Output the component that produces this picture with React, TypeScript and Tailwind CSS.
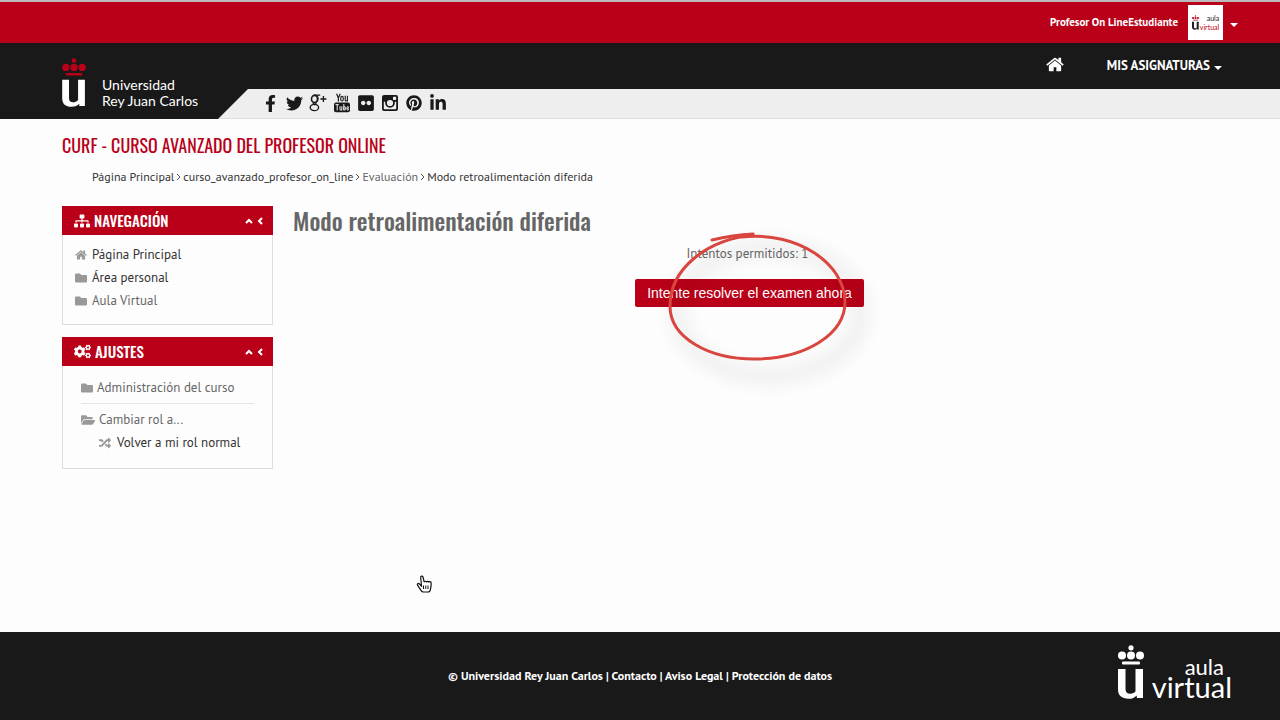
import type { ReactNode } from 'react';
import {
  FaCogs,
  FaFacebookF,
  FaFlickr,
  FaFolder,
  FaFolderOpen,
  FaLinkedinIn,
  FaPinterest,
  FaRandom,
  FaSitemap,
  FaTwitter,
} from 'react-icons/fa';

function HomeIcon({ className }: { className: string }) {
  return (
    <svg viewBox="64 192 1664 1408" className={className} fill="currentColor" aria-hidden="true">
      <path d="M1472 992v480q0 26-19 45t-45 19h-384v-384H768v384H384q-26 0-45-19t-19-45V992q0-1 .5-3t.5-3l575-474 575 474q1 2 1 6zm223-69-62 74q-8 9-21 11h-3q-13 0-21-7L896 424l-692 577q-12 8-24 7-13-2-21-11l-62-74q-8-10-7-23.500t11-21.500l719-599q32-26 76-26t76 26l244 204V288q0-14 9-23t23-9h192q14 0 23 9t9 23v408l219 182q10 8 11 21.500t-7 23.500z" />
    </svg>
  );
}

function GooglePlusIcon() {
  return (
    <svg viewBox="0 0 18 18" className="h-[18px] w-[18px]" fill="none" stroke="currentColor" aria-hidden="true">
      <ellipse cx="5.5" cy="5" rx="3" ry="3.6" strokeWidth="1.6" />
      <path d="M5 1.2h6.2M7.6 1.4c2 1.8 1.9 4.6.2 6.2-1.5 1.2-1.6 1.9 0 3" strokeWidth="1.2" />
      <ellipse cx="5.4" cy="13.5" rx="4.2" ry="3.2" strokeWidth="1.3" />
      <path d="M5 8.6c-1.2.8-1 1.6 1 2.2" strokeWidth="1.3" />
      <path d="M11.4 5h6M14.4 2v6" strokeWidth="1.3" />
    </svg>
  );
}

function YoutubeIcon() {
  return (
    <svg viewBox="0 0 16 20" className="h-5 w-4" fill="currentColor" aria-hidden="true">
      <path d="M2.6.8 4.4 5v3.4M6.2.8 4.4 5" fill="none" stroke="currentColor" strokeWidth="1.2" />
      <rect x="6.8" y="3.4" width="2.4" height="4.6" rx="1.2" fill="none" stroke="currentColor" strokeWidth="1.1" />
      <path d="M11.2 2.8v4.4c0 1.2 1.6.8 2.2-.2M13.4 2.8v5.6" fill="none" stroke="currentColor" strokeWidth="1.1" />
      <rect x="0" y="9.6" width="16" height="9.6" rx="2" />
      <g fill="none" stroke="#eee" strokeWidth="1">
        <path d="M1.6 11.6h3.2M3.2 11.6v5.8M6 13.2v3.4c0 .9 1 .7 1.6 0M7.8 13.2v4.4M9.8 11v6.4" />
        <rect x="9.8" y="13.6" width="1.6" height="3.4" rx=".7" />
        <path d="M14.6 16.2c0 1.5-1.6 1.5-1.6 0v-1.6c0-1.5 1.6-1.5 1.6 0v.6H13" />
      </g>
    </svg>
  );
}

function InstagramIcon() {
  return (
    <svg viewBox="0 0 16 16" className="h-4 w-4" aria-hidden="true">
      <path
        fill="currentColor"
        fillRule="evenodd"
        d="M2 0h12a2 2 0 0 1 2 2v12a2 2 0 0 1-2 2H2a2 2 0 0 1-2-2V2a2 2 0 0 1 2-2Zm-.2 6.8v6.7c0 .4.3.7.7.7h11c.4 0 .7-.3.7-.7V6.8h-1.4a4.9 4.9 0 1 1-9.6 0Zm9.9-5a.7.7 0 0 0-.7.7v1.8c0 .4.3.7.7.7h1.8c.4 0 .7-.3.7-.7V2.500a.7.7 0 0 0-.7-.7ZM8 4.900a3.100 3.100 0 1 0 0 6.200 3.100 3.100 0 0 0 0-6.200Z"
      />
    </svg>
  );
}

// Crown over the letter u, shared by the three university logos
function CrownLogo({ className, crown }: { className: string; crown: string }) {
  return (
    <svg viewBox="0 0 26 54" className={className} aria-hidden="true">
      <g className={crown}>
        <circle cx="13" cy="2.8" r="2.6" />
        <circle cx="4" cy="10.4" r="4" />
        <circle cx="13" cy="10.4" r="4" />
        <circle cx="22" cy="10.4" r="4" />
        <rect x="4" y="16.4" width="18" height="3" rx="1" />
      </g>
      <path
        fill="currentColor"
        d="M0 24h7.5v20c0 3.2 1.4 4.8 4.6 4.8 2.6 0 4.5-1.4 5.4-2.6V24H25v29h-6.2v-2.6c-2 2-4.6 3.4-8.4 3.4C3.7 53.8 0 50.4 0 44.6Z"
      />
    </svg>
  );
}

function Caret() {
  return <span className="mt-1 border-x-4 border-t-4 border-x-transparent border-t-white" />;
}

function Separator() {
  return (
    <svg viewBox="0 0 5 8" className="mx-0.5 h-2 w-[5px]" fill="none" stroke="#555" aria-hidden="true">
      <path d="m1 1 3 3-3 3" />
    </svg>
  );
}

const social = [
  { name: 'Facebook', icon: <FaFacebookF size={17} /> },
  { name: 'Twitter', icon: <FaTwitter size={17} /> },
  { name: 'Google+', icon: <GooglePlusIcon /> },
  { name: 'YouTube', icon: <YoutubeIcon /> },
  { name: 'Flickr', icon: <FaFlickr size={18} /> },
  { name: 'Instagram', icon: <InstagramIcon /> },
  { name: 'Pinterest', icon: <FaPinterest size={16} /> },
  { name: 'LinkedIn', icon: <FaLinkedinIn size={18} /> },
];

const navItems = [
  { label: 'Página Principal', icon: <HomeIcon className="h-2.5 w-3" />, color: 'text-[#333]' },
  { label: 'Área personal', icon: <FaFolder size={12} />, color: 'text-[#333]' },
  { label: 'Aula Virtual', icon: <FaFolder size={12} />, color: 'text-[#666]' },
];

function Block({ title, icon, children }: { title: string; icon: ReactNode; children: ReactNode }) {
  return (
    <section className="border border-[#ddd]">
      <div className="-mx-px -mt-px flex h-[29px] items-center bg-[#b90018] pr-2.5 pl-3 text-white">
        {icon}
        <h2 className="ml-1 font-['Oswald','Roboto_Condensed',sans-serif] text-[15px] font-medium">{title}</h2>
        <div className="ml-auto flex items-center gap-1">
          <button type="button" aria-label={`Contraer ${title}`}>
            <svg viewBox="0 0 8 6" className="h-1.5 w-2" fill="none" stroke="currentColor" strokeWidth="2">
              <path d="m1 5 3-3 3 3" />
            </svg>
          </button>
          <button type="button" aria-label={`Acoplar ${title}`}>
            <svg viewBox="0 0 6 8" className="h-2 w-1.5" fill="none" stroke="currentColor" strokeWidth="2">
              <path d="M5 1 2 4l3 3" />
            </svg>
          </button>
        </div>
      </div>
      {children}
    </section>
  );
}

export default function App() {
  return (
    <div className="relative flex min-h-screen flex-col bg-[#fdfdfd] font-['PT_Sans','Open_Sans',sans-serif] text-[13px] text-[#333]">
      <div className="flex h-[43px] items-center justify-end border-t-2 border-[#bbb] bg-[#b90018] pr-[42px] text-white">
        <button type="button" className="flex items-center">
          <span className="text-[11px] font-bold">Profesor On LineEstudiante</span>
          <span className="mr-[7px] ml-2.5 flex h-[35px] w-[35px] items-center justify-center gap-px bg-white text-[#222]">
            <CrownLogo className="h-[15px] w-[7px]" crown="fill-[#b90018]" />
            <span className="flex flex-col items-end font-['Lato',sans-serif] text-[7px] leading-[9px]">
              <span>aula</span>
              <span className="text-[#b90018]">virtual</span>
            </span>
          </span>
          <Caret />
        </button>
      </div>

      <header className="flex bg-[#191919] text-white">
        <a href="#" className="flex h-[76px] w-[218px] shrink-0 items-end pb-2.5 pl-[62px]">
          <CrownLogo className="mb-0.5 h-[49px] w-6" crown="fill-[#b90018]" />
          <span className="ml-4 font-['Lato',sans-serif] text-sm leading-4 whitespace-nowrap">
            Universidad
            <br />
            Rey Juan Carlos
          </span>
        </a>
        <div className="flex flex-1 flex-col">
          <nav className="flex h-[46px] items-center justify-end gap-[43px] pr-[58px]">
            <a href="#" aria-label="Inicio" className="pb-1">
              <HomeIcon className="h-[15px] w-[18px]" />
            </a>
            <button type="button" className="flex items-center gap-1 text-[13px] font-bold">
              MIS ASIGNATURAS
              <Caret />
            </button>
          </nav>
          <div className="flex h-[30px] border-b border-[#ddd] bg-[#eee] text-[#191919]">
            <svg viewBox="0 0 30 30" className="h-[30px] w-[30px] shrink-0" aria-hidden="true">
              <path d="M0 0h30L0 30Z" fill="#191919" />
            </svg>
            <ul className="ml-2.5 flex h-7 items-center">
              {social.map((item) => (
                <li key={item.name} className="flex w-6 justify-center">
                  <a href="#" aria-label={item.name}>
                    {item.icon}
                  </a>
                </li>
              ))}
            </ul>
          </div>
        </div>
      </header>

      <div className="px-[62px] pt-3 pb-10">
        <h1 className="font-['Oswald','Roboto_Condensed',sans-serif] text-lg leading-7 font-normal text-[#b90018]">
          CURF - CURSO AVANZADO DEL PROFESOR ONLINE
        </h1>
        <nav aria-label="Ruta" className="mt-2 ml-[30px] flex h-5 items-center text-xs whitespace-nowrap">
          <a href="#">Página Principal</a>
          <Separator />
          <a href="#">curso_avanzado_profesor_on_line</a>
          <Separator />
          <span className="text-[#666]">Evaluación</span>
          <Separator />
          <a href="#">Modo retroalimentación diferida</a>
        </nav>

        <div className="mt-[19px] flex gap-5">
          <aside className="flex w-[211px] shrink-0 flex-col gap-3">
            <Block title="NAVEGACIÓN" icon={<FaSitemap size={16} />}>
              <ul className="px-3 pt-2 pb-3">
                {navItems.map((item) => (
                  <li key={item.label} className="flex h-[23px] items-center gap-[5px]">
                    <span className="text-[#999]">{item.icon}</span>
                    <a href="#" className={item.color}>
                      {item.label}
                    </a>
                  </li>
                ))}
              </ul>
            </Block>
            <Block title="AJUSTES" icon={<FaCogs size={17} />}>
              <div className="px-[18px] pt-2.5 pb-3.5">
                <div className="flex h-7 items-start gap-1 border-b border-[#e5e5e5] pt-1 leading-4 text-[#666]">
                  <FaFolder size={12} className="mt-0.5 text-[#999]" />
                  Administración del curso
                </div>
                <div className="mt-1 flex h-[23px] items-center gap-1 text-[#666]">
                  <FaFolderOpen size={14} className="text-[#999]" />
                  Cambiar rol a...
                </div>
                <div className="ml-[18px] flex h-[23px] items-center gap-1.5">
                  <FaRandom size={12} className="text-[#999]" />
                  <a href="#">Volver a mi rol normal</a>
                </div>
              </div>
            </Block>
          </aside>

          <main className="flex-1">
            <h2 className="font-['Oswald','Roboto_Condensed',sans-serif] text-2xl leading-7 font-medium text-[#666]">
              Modo retroalimentación diferida
            </h2>
            <div className="mt-3 mr-3 flex flex-col items-center">
              <p className="mr-1 leading-4 text-[#666]">Intentos permitidos: 1</p>
              <div className="relative mt-[17px]">
                <button
                  type="button"
                  className="h-7 rounded-xs bg-[#b90018] px-3 font-['Liberation_Sans',sans-serif] text-sm font-medium whitespace-nowrap text-white"
                >
                  Intente resolver el examen ahora
                </button>
                <svg
                  viewBox="0 0 250 180"
                  className="pointer-events-none absolute -top-[59px] left-0 h-[180px] w-[250px] max-w-none"
                  fill="none"
                  aria-hidden="true"
                >
                  <ellipse cx="134" cy="92" rx="92" ry="64" stroke="#000" strokeWidth="16" opacity=".06" className="blur-[9px]" />
                  <g stroke="#d9453f" strokeWidth="3" strokeLinecap="round">
                    <path d="M77 20c13-3 24-5 41-6" />
                    <path d="M118 15C71 20 35 49 35 86c0 32 39 53 84 53 52 0 91-25 91-57 0-38-47-71-103-65" />
                  </g>
                </svg>
              </div>
            </div>
          </main>
        </div>
      </div>

      <footer className="mt-auto grid h-[88px] grid-cols-[1fr_auto_1fr] items-center bg-[#191919] px-12 text-white">
        <p className="col-start-2 text-xs font-bold">
          © Universidad Rey Juan Carlos | <a href="#">Contacto</a> | <a href="#">Aviso Legal</a> |{' '}
          <a href="#">Protección de datos</a>
        </p>
        <a href="#" className="mb-2 flex items-end gap-2 justify-self-end">
          <CrownLogo className="h-[54px] w-[26px]" crown="fill-white" />
          <span className="flex flex-col items-end font-['Lato',sans-serif]">
            <span className="pr-2 text-[22px] leading-4">aula</span>
            <span className="text-[29px] leading-6">virtual</span>
          </span>
        </a>
      </footer>

      {/* hand pointer */}
      <svg viewBox="0 0 16 18" className="pointer-events-none absolute top-[575px] left-[416px] h-[18px] w-4" aria-hidden="true">
        <path
          d="M5.5 11 3.2 8.8C2 8 .8 9 1.6 10.2L5 15.4c.5.9 1.3 1.6 2.4 1.6H12c1.5 0 2.1-1 2.4-2.400l.7-4V7.800c0-1.500-1.900-1.500-2.100-.3-.1-1.500-2.200-1.500-2.400-.2-.2-1.400-2.200-1.400-2.400-.1L7 2C6.500.5 4.400.9 4.700 2.500Z"
          fill="#fff"
          stroke="#111"
          strokeWidth="1.2"
        />
        <path d="M7.5 10.5v3.5M9.8 10.5v3.5M12 10.5v3.5" stroke="#111" />
      </svg>
    </div>
  );
}
